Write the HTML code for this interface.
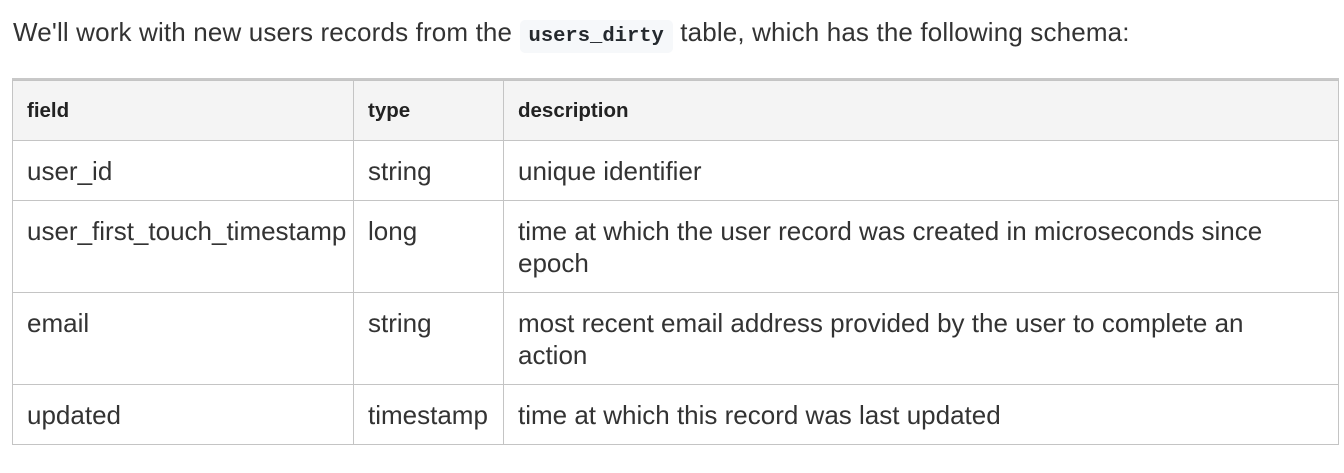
<!DOCTYPE html>
<html><head><style>
body{margin:0;background:#fff;font-family:"Liberation Sans","DejaVu Sans",sans-serif;color:#333;width:1344px;height:473px;overflow:hidden;position:relative}
p{position:absolute;left:13px;top:14px;margin:0;font-size:26px;line-height:36px;white-space:nowrap;letter-spacing:0.15px}
code{font-family:"Liberation Mono",monospace;font-weight:bold;font-size:20.5px;background:#f6f8fa;border-radius:5px;padding:5px 9px;color:#24292e;letter-spacing:0}
table{position:absolute;left:12px;top:80px;border-collapse:collapse;table-layout:fixed;width:1327px;border:1px solid #c4c4c4;box-shadow:0 -2px 0 #c8c8c8}
td,th{border:1px solid #c4c4c4;padding:0 14px;font-size:26px;line-height:32px;text-align:left;vertical-align:middle;white-space:nowrap}
th{background:#f4f4f4;font-size:20.5px;font-weight:bold;height:59px;color:#222}
tr.r1 td{height:59px}tr.r2 td{height:77px;vertical-align:top;padding-top:14px}tr.r4 td{height:59px}
</style></head><body>
<p>We'll work with new users records from the <code>users_dirty</code> table, which has the following schema:</p>
<table>
<colgroup><col style="width:341px"><col style="width:150px"><col></colgroup>
<tr><th>field</th><th>type</th><th>description</th></tr>
<tr class="r1"><td>user_id</td><td>string</td><td>unique identifier</td></tr>
<tr class="r2"><td>user_first_touch_timestamp</td><td>long</td><td>time at which the user record was created in microseconds since<br>epoch</td></tr>
<tr class="r2"><td>email</td><td>string</td><td>most recent email address provided by the user to complete an<br>action</td></tr>
<tr class="r4"><td>updated</td><td>timestamp</td><td>time at which this record was last updated</td></tr>
</table>
</body></html>
